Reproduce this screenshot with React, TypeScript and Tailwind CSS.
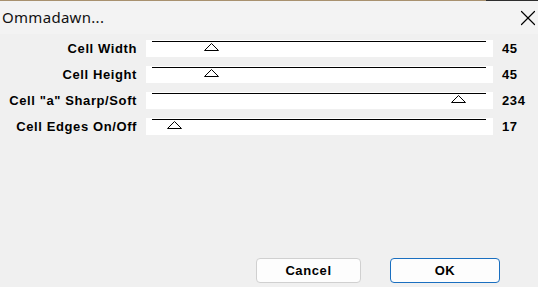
import { X } from "lucide-react";

const rows = [
  { label: "Cell Width", value: 45 },
  { label: "Cell Height", value: 45 },
  { label: 'Cell "a" Sharp/Soft', value: 234 },
  { label: "Cell Edges On/Off", value: 17 },
];

const MAX = 255;
const TRACK = 334;

function Slider({ value }: { value: number }) {
  const left = 6 + (value / MAX) * TRACK;
  return (
    <div className="relative w-[347px] h-[17px] bg-white">
      <div className="absolute left-[6px] right-[7px] top-[1px] h-px bg-black" />
      <svg
        className="absolute top-[3px]"
        style={{ left: left - 7 }}
        width="15"
        height="8"
        viewBox="0 0 15 8"
      >
        <polygon points="7.5,0.5 14.5,7.5 0.5,7.5" fill="white" stroke="black" strokeWidth="1" />
      </svg>
    </div>
  );
}

export default function App() {
  const bold = "font-['Liberation_Sans',Arial,sans-serif] font-bold text-[13px] tracking-[0.6px] text-black";

  return (
    <div className="w-[538px] h-[287px] bg-[#a08a6d] flex flex-col overflow-hidden">
      <div className="h-px flex shrink-0">
        <div className="w-[486px] bg-[#a8916f]" />
        <div className="flex-1 bg-[#2e2e2e]" />
      </div>
      <div className="flex-1 flex flex-col bg-[#f0f0f0] rounded-tl-[7px]">
        <div className="h-[33px] flex items-center justify-between pl-[2px] bg-[#f3f3f3]">
          <span className="font-['Noto_Sans',sans-serif] text-[15px] tracking-[0.3px] text-[#111] leading-none pb-[1px]">
            Ommadawn...
          </span>
          <X size={26} strokeWidth={1.1} className="text-black -mr-[3px]" />
        </div>

        <div className="flex flex-col pt-[6px]">
          {rows.map((r) => (
            <div key={r.label} className="h-[26px] flex items-start">
              <div className={`w-[137px] text-right leading-[17px] ${bold}`}>{r.label}</div>
              <div className="ml-[9px]">
                <Slider value={r.value} />
              </div>
              <div className={`ml-[9px] leading-[17px] ${bold}`}>{r.value}</div>
            </div>
          ))}
        </div>

        <div className="mt-auto flex pl-[256px] pb-[4px] gap-[29px]">
          <button className={`w-[105px] h-[25px] rounded-[4px] border border-[#d0d0d0] bg-[#fdfdfd] ${bold}`}>
            Cancel
          </button>
          <button className={`w-[110px] h-[25px] rounded-[4px] border border-[#1a6fc0] bg-[#fdfdfd] ${bold}`}>
            OK
          </button>
        </div>
      </div>
    </div>
  );
}
